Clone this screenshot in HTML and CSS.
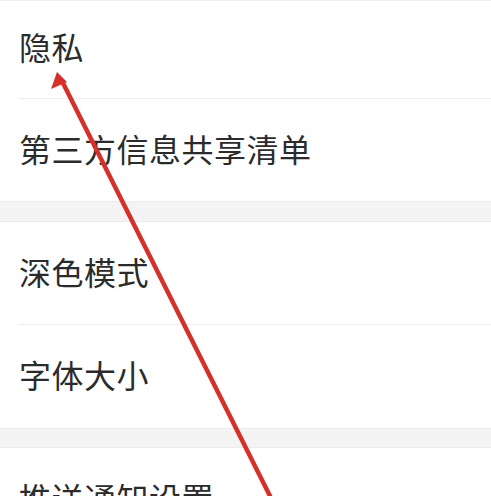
FILE: index.html
```html
<!DOCTYPE html>
<html lang="zh">
<head>
<meta charset="utf-8">
<link rel="stylesheet" href="styles.css">
</head>
<body>
<div class="page">
  <div class="topline"></div>
  <div class="group">
    <div class="row first">隐私</div>
    <div class="divider"></div>
    <div class="row">第三方信息共享清单</div>
  </div>
  <div class="gap"></div>
  <div class="group">
    <div class="row">深色模式</div>
    <div class="divider"></div>
    <div class="row tall">字体大小</div>
  </div>
  <div class="gap short"></div>
  <div class="group">
    <div class="row">推送通知设置</div>
  </div>
  <svg class="arrow" width="491" height="496" viewBox="0 0 491 496">
    <line x1="272" y1="500" x2="62" y2="81" stroke="#d6302a" stroke-width="4.5" stroke-linecap="round"/>
    <polygon points="57,72 51,89 67,82" fill="#d6302a"/>
  </svg>
</div>
</body>
</html>
```

FILE: styles.css
```css
* { box-sizing: border-box; }
html, body {
  margin: 0;
  padding: 0;
  background: #ffffff;
  overflow: hidden;
}
.page {
  position: relative;
  width: 491px;
  height: 496px;
  overflow: hidden;
  font-family: "Noto Sans CJK SC", "Noto Sans", sans-serif;
  color: #2b2b2b;
}
.topline {
  height: 1px;
  background: #f0f0f0;
}
.group {
  background: #ffffff;
}
.row {
  height: 102px;
  display: flex;
  align-items: center;
  padding-left: 19px;
  padding-bottom: 5px;
  font-size: 32px;
  line-height: 1;
  letter-spacing: 0.5px;
}
.row.first {
  height: 97px;
  padding-bottom: 7px;
}
.row.tall {
  height: 103px;
}
.divider {
  height: 1px;
  margin-left: 18px;
  background: #ececec;
}
.gap {
  height: 21px;
  background: #f4f4f4;
  border-top: 1px solid #ececec;
  border-bottom: 1px solid #ececec;
}
.gap.short {
  height: 20px;
}
.arrow {
  position: absolute;
  left: 0;
  top: 0;
}
```
